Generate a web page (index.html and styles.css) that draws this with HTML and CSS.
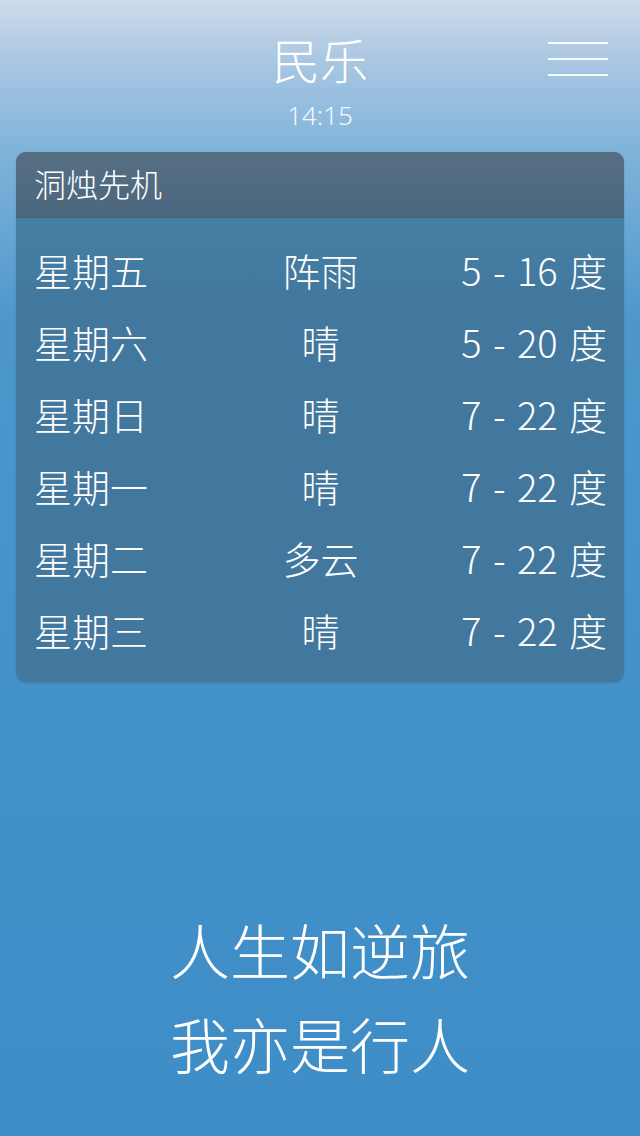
FILE: index.html
```html
<!DOCTYPE html>
<html lang="zh-CN">
<head>
<meta charset="utf-8">
<title>民乐</title>
<link rel="stylesheet" href="styles.css">
</head>
<body>
<div class="page">
  <header class="top">
    <div class="title-wrap">
      <h1 class="title">民乐</h1>
      <div class="time">14:15</div>
    </div>
    <div class="menu" aria-label="menu">
      <span class="menu-line"></span>
      <span class="menu-line"></span>
      <span class="menu-line"></span>
    </div>
  </header>

  <section class="card">
    <div class="card-head">洞烛先机</div>
    <div class="card-body">
      <div class="row"><span class="day">星期五</span><span class="wx">阵雨</span><span class="temp">5 - 16 度</span></div>
      <div class="row"><span class="day">星期六</span><span class="wx">晴</span><span class="temp">5 - 20 度</span></div>
      <div class="row"><span class="day">星期日</span><span class="wx">晴</span><span class="temp">7 - 22 度</span></div>
      <div class="row"><span class="day">星期一</span><span class="wx">晴</span><span class="temp">7 - 22 度</span></div>
      <div class="row"><span class="day">星期二</span><span class="wx">多云</span><span class="temp">7 - 22 度</span></div>
      <div class="row"><span class="day">星期三</span><span class="wx">晴</span><span class="temp">7 - 22 度</span></div>
    </div>
  </section>

  <div class="quote">
    <p class="quote-line">人生如逆旅</p>
    <p class="quote-line">我亦是行人</p>
  </div>
</div>
</body>
</html>
```
FILE: styles.css
```css
html, body {
  margin: 0;
  padding: 0;
}
body {
  width: 640px;
  height: 1136px;
  overflow: hidden;
  font-family: "Noto Sans CJK SC", "Noto Sans", sans-serif;
  font-weight: 200;
  color: #ffffff;
  background: linear-gradient(180deg,
    #cfdbe9 0px,
    #a9c7e2 60px,
    #80b4da 150px,
    #4d97cc 320px,
    #4391c9 700px,
    #3e8dc6 1136px);
}
.page {
  display: flex;
  flex-direction: column;
  height: 1136px;
}
.top {
  display: grid;
  grid-template-columns: 1fr auto 1fr;
  padding-top: 30px;
}
.title-wrap {
  grid-column: 2;
  display: flex;
  flex-direction: column;
  align-items: center;
}
.title {
  margin: 0;
  font-size: 48px;
  line-height: 56px;
  font-weight: 300;
  letter-spacing: 0;
}
.time {
  margin-top: 14px;
  font-size: 26px;
  line-height: 30px;
  color: rgba(255,255,255,0.92);
  font-family: "Noto Sans", "Noto Sans CJK SC", sans-serif;
  font-weight: 300;
}
.menu {
  grid-column: 3;
  justify-self: end;
  align-self: start;
  margin-top: 12px;
  margin-right: 32px;
  display: flex;
  flex-direction: column;
  gap: 14px;
}
.menu-line {
  display: block;
  width: 60px;
  height: 2px;
  background: rgba(255,255,255,0.95);
}
.card {
  margin: 22px 16px 0;
  border-radius: 10px;
  overflow: hidden;
  background: #42789d;
  box-shadow: 0 1px 2px rgba(40,70,100,0.25);
}
.card-head {
  height: 65px;
  padding-left: 18px;
  font-size: 32px;
  line-height: 63px;
  background: linear-gradient(180deg, #566e82 0%, #4b687f 100%);
  border-bottom: 1px solid #456279;
}
.card-body {
  padding: 16px 17px 16px 18px;
  background: linear-gradient(180deg, #477fa4 0px, #42789d 80px, #42789d 100%);
}
.row {
  display: grid;
  grid-template-columns: 1fr 1fr 1fr;
  height: 72px;
  align-items: center;
  font-size: 38px;
  line-height: 72px;
}
.day { text-align: left; }
.wx { text-align: center; }
.temp {
  text-align: right;
  word-spacing: 3px;
}
.quote {
  margin-top: 220px;
  text-align: center;
}
.quote-line {
  margin: 0;
  font-size: 60px;
  line-height: 94px;
  letter-spacing: 0;
}
```
